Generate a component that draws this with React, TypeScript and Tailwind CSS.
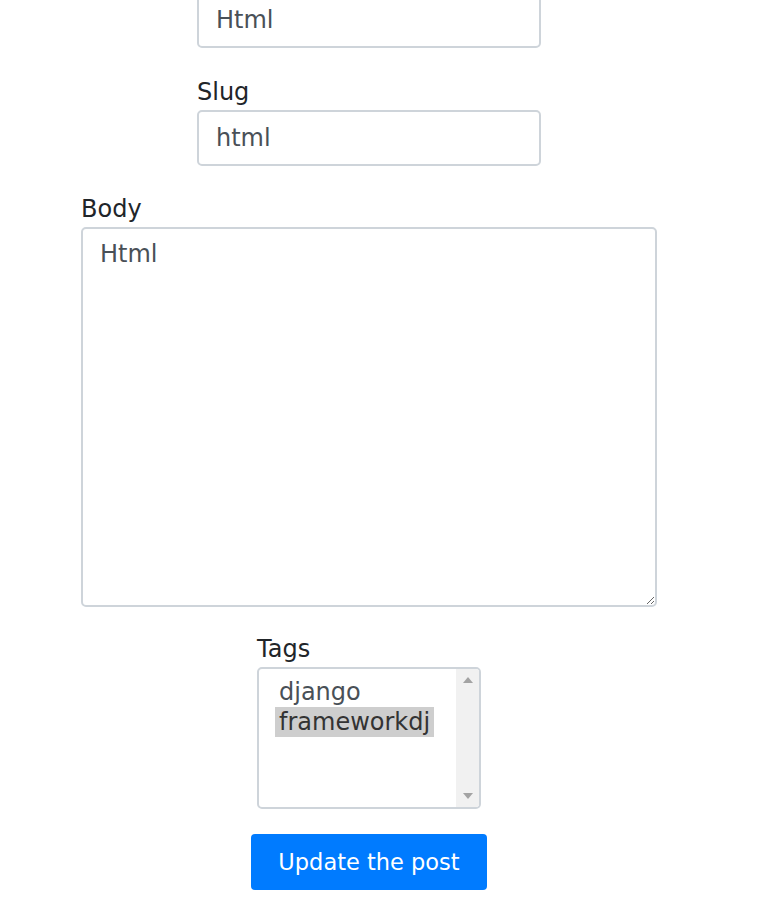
import { useState } from 'react';

const font = { fontFamily: '"DejaVu Sans", sans-serif' };

export default function App() {
  const [title, setTitle] = useState('Html');
  const [slug, setSlug] = useState('html');
  const [body, setBody] = useState('Html');

  return (
    <div className="min-h-[905px] w-[770px] overflow-hidden bg-white" style={font}>
      <form className="-mt-[8px] flex w-[738px] flex-col items-center text-[24px] leading-[36px] text-[#212529]">
        <div className="flex flex-col">
          <input
            value={title}
            onChange={(e) => setTitle(e.target.value)}
            className="h-[56px] w-[344px] rounded-[5px] border-2 border-[#ced4da] px-[17px] text-[#495057] outline-none"
          />
        </div>

        <div className="mt-[26px] flex flex-col">
          <label>Slug</label>
          <input
            value={slug}
            onChange={(e) => setSlug(e.target.value)}
            className="h-[56px] w-[344px] rounded-[5px] border-2 border-[#ced4da] px-[17px] text-[#495057] outline-none"
          />
        </div>

        <div className="mt-[25px] flex flex-col">
          <label>Body</label>
          <textarea
            value={body}
            onChange={(e) => setBody(e.target.value)}
            className="h-[380px] w-[576px] rounded-[5px] border-2 border-[#ced4da] px-[17px] py-[7px] text-[#495057] outline-none"
          />
        </div>

        <div className="mt-[24px] flex flex-col">
          <label>Tags</label>
          <div className="flex h-[142px] w-[224px] overflow-hidden rounded-[5px] border-2 border-[#ced4da]">
            <div className="flex flex-1 flex-col items-start pl-[16px] pt-[8px] leading-[30px] text-[#495057]">
              <span className="px-[4px]">django</span>
              <span className="bg-[#cecece] px-[4px] text-[#333]">frameworkdj</span>
            </div>
            <div className="flex w-[23px] flex-col items-center justify-between bg-[#f1f1f1] py-[8px]">
              <span className="h-0 w-0 border-x-[5px] border-b-[6px] border-x-transparent border-b-[#a3a3a3]" />
              <span className="h-0 w-0 border-x-[5px] border-t-[6px] border-x-transparent border-t-[#a3a3a3]" />
            </div>
          </div>
        </div>

        <button
          type="button"
          className="mt-[25px] h-[56px] w-[236px] rounded-[4px] bg-[#007bff] text-[22.5px] text-white"
        >
          Update the post
        </button>
      </form>
    </div>
  );
}
